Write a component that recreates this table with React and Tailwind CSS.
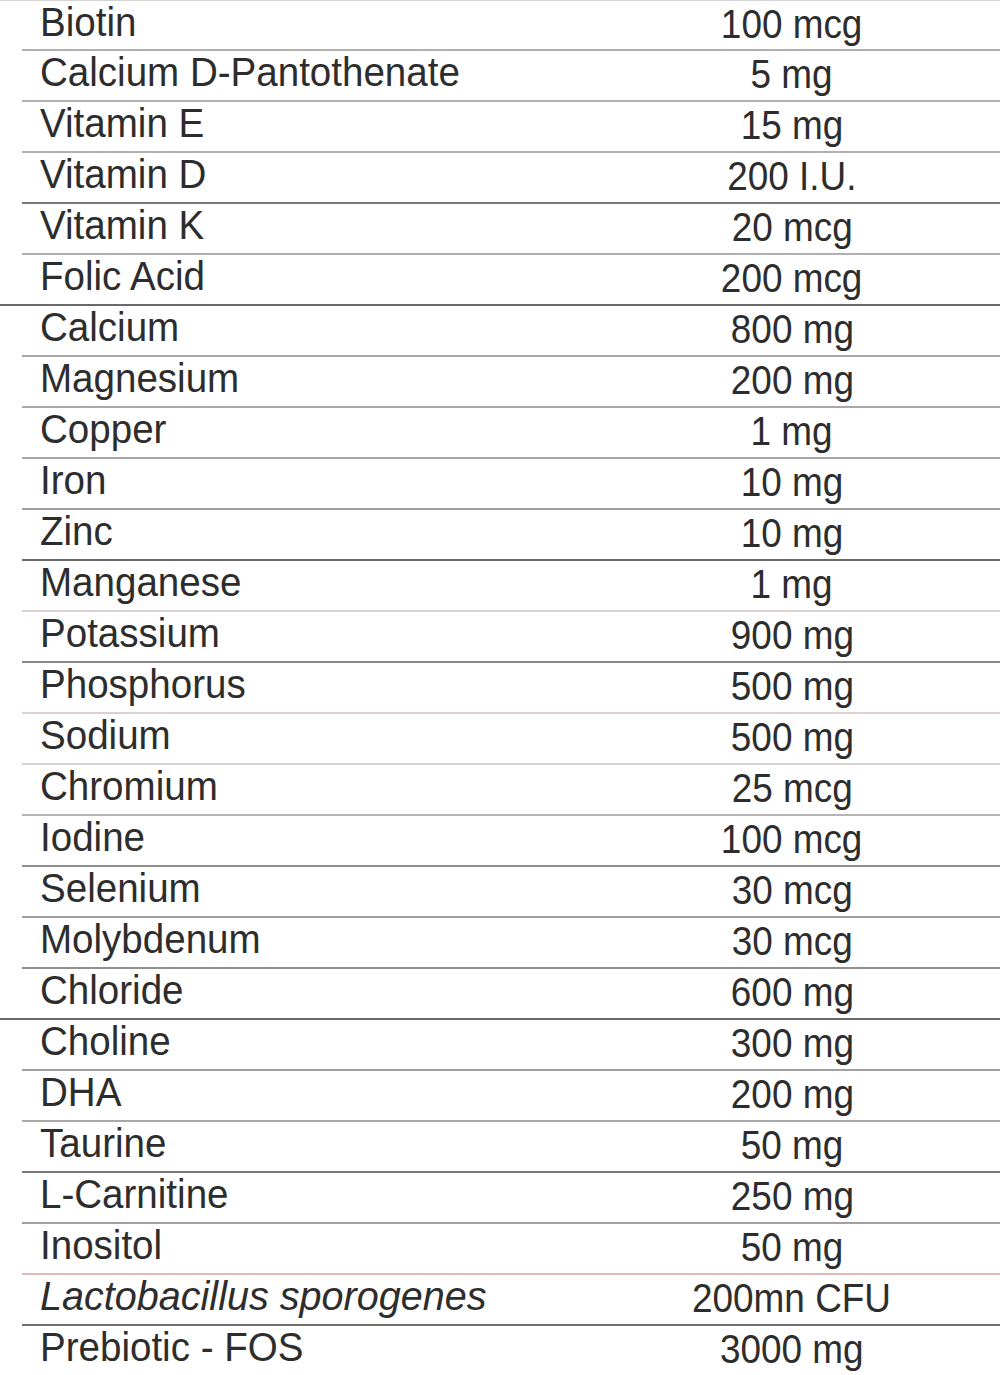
import React from "react";

const rows = [
  ["Biotin", "100 mcg", "border-[#b0b0b0]", false],
  ["Calcium D-Pantothenate", "5 mg", "border-[#b0b0b0]", false],
  ["Vitamin E", "15 mg", "border-[#b4b0b0]", false],
  ["Vitamin D", "200 I.U.", "border-[#7a7a7a]", false],
  ["Vitamin K", "20 mcg", "border-[#b0b0b0]", false],
  ["Folic Acid", "200 mcg", "border-[#6a6a6a]", true],
  ["Calcium", "800 mg", "border-[#a8a8a8]", false],
  ["Magnesium", "200 mg", "border-[#a8a8a8]", false],
  ["Copper", "1 mg", "border-[#a8a8a8]", false],
  ["Iron", "10 mg", "border-[#a0a0a0]", false],
  ["Zinc", "10 mg", "border-[#6a6a6a]", false],
  ["Manganese", "1 mg", "border-[#dcd0d0]", false],
  ["Potassium", "900 mg", "border-[#888888]", false],
  ["Phosphorus", "500 mg", "border-[#dcd0d0]", false],
  ["Sodium", "500 mg", "border-[#dcd0d0]", false],
  ["Chromium", "25 mcg", "border-[#b8b4b4]", false],
  ["Iodine", "100 mcg", "border-[#909090]", false],
  ["Selenium", "30 mcg", "border-[#a0a0a0]", false],
  ["Molybdenum", "30 mcg", "border-[#909090]", false],
  ["Chloride", "600 mg", "border-[#6a6a6a]", true],
  ["Choline", "300 mg", "border-[#a0a0a0]", false],
  ["DHA", "200 mg", "border-[#a8a8a8]", false],
  ["Taurine", "50 mg", "border-[#7a7a7a]", false],
  ["L-Carnitine", "250 mg", "border-[#a0a0a0]", false],
  ["Inositol", "50 mg", "border-[#e2b8b8]", false],
  ["Lactobacillus sporogenes", "200mn CFU", "border-[#707070]", false],
  ["Prebiotic - FOS", "3000 mg", "border-transparent", false],
];

export default function App() {
  return (
    <div
      className="w-[1000px] h-[1375px] overflow-hidden bg-white text-[#2d2d2d]"
      style={{ fontFamily: '"Liberation Sans", Arial, sans-serif' }}
    >
      <div className="border-t border-[#d4d4d4]">
        {rows.map(([name, value, border, full], i) => (
          <div
            key={i}
            className={
              "grid grid-cols-[544px_1fr] border-b-2 " +
              (i === 0 ? "h-[50px] " : "h-[51px] ") +
              border +
              " " +
              (full ? "pl-[40px]" : "ml-[22px] pl-[18px]")
            }
          >
            <div className="text-[41px] leading-[42px] whitespace-nowrap">
              <span
                className={
                  name === "Lactobacillus sporogenes"
                    ? "inline-block origin-left scale-x-[0.965] italic"
                    : "inline-block origin-left scale-x-[0.94]"
                }
              >
                {name}
              </span>
            </div>
            <div className="text-center text-[41px] leading-[42px] pt-[2px] whitespace-nowrap">
              <span className="inline-block origin-center scale-x-[0.9]">
                {value}
              </span>
            </div>
          </div>
        ))}
      </div>
    </div>
  );
}
